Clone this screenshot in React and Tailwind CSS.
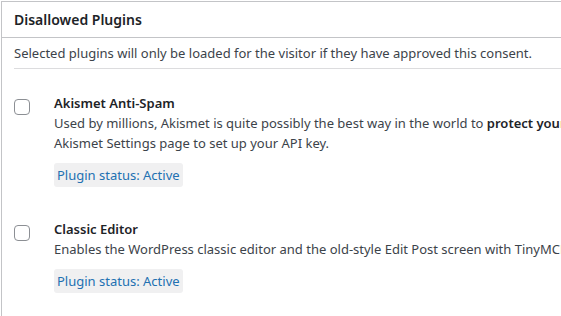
const plugins = [
  {
    name: "Akismet Anti-Spam",
    description: (
      <>
        Used by millions, Akismet is quite possibly the best way in the world to{" "}
        <strong className="font-semibold text-[#1d2327]">protect your blog from spam</strong>. It keeps your site
        protected even while you sleep. To get started: activate the Akismet plugin and then go to your
        <br />
        Akismet Settings page to set up your API key.
      </>
    ),
    status: "Active",
  },
  {
    name: "Classic Editor",
    description:
      "Enables the WordPress classic editor and the old-style Edit Post screen with TinyMCE, Meta Boxes, etc. Supports the older plugins that extend this screen.",
    status: "Active",
  },
];

function PluginRow({ plugin }) {
  return (
    <label className="flex items-start gap-[24px] pl-[12px] pt-[24px] pb-[8px]">
      <input
        type="checkbox"
        className="appearance-none shrink-0 mt-[6px] w-[16px] h-[16px] rounded-[4px] border border-[#8c8f94] bg-white"
      />
      <div className="flex flex-col items-start w-[1400px]">
        <div className="text-[13px] leading-[20px] font-semibold text-[#1d2327]">{plugin.name}</div>
        <div className="text-[13px] leading-[20px] text-[#3c434a]">{plugin.description}</div>
        <span className="mt-[10px] px-[3px] py-[2px] rounded-[3px] bg-[#f0f0f1] text-[13px] leading-[20px] text-[#2271b1]">
          Plugin status: {plugin.status}
        </span>
      </div>
    </label>
  );
}

export default function App() {
  return (
    <div className="w-[561px] h-[316px] overflow-hidden bg-white font-['Noto_Sans',sans-serif]">
      <div className="ml-px mt-px w-[1500px] min-h-[330px] border-l border-t border-[#c3c4c7]">
        <div className="h-[36px] px-[12px] border-b border-[#c3c4c7] text-[14px] leading-[36px] font-semibold text-[#1d2327]">
          Disallowed Plugins
        </div>
        <div className="mx-[12px] pt-[5px] pb-[5px] border-b border-[#dcdcde] text-[13px] leading-[20px] text-[#3c434a]">
          Selected plugins will only be loaded for the visitor if they have approved this consent.
        </div>
        {plugins.map((p) => (
          <PluginRow key={p.name} plugin={p} />
        ))}
      </div>
    </div>
  );
}
